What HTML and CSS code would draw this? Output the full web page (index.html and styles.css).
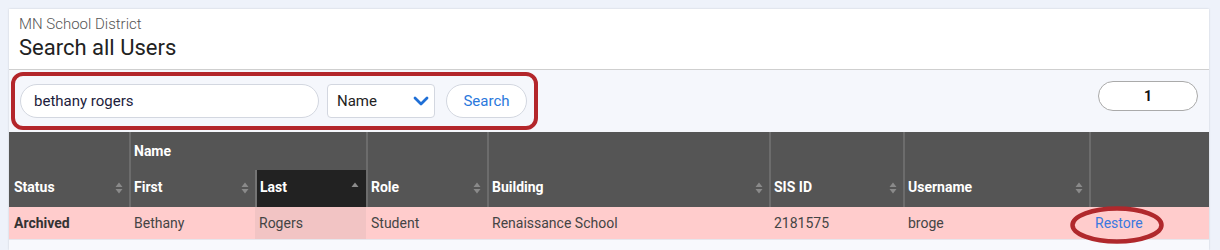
FILE: index.html
```html
<!DOCTYPE html>
<html lang="en">
<head>
<meta charset="utf-8">
<title>Search all Users</title>
<link rel="stylesheet" href="styles.css">
</head>
<body>
<div class="panel">
  <div class="header">
    <div class="org">MN School District</div>
    <h1 class="title">Search all Users</h1>
  </div>
  <div class="toolbar">
    <div class="search-box">
      <input class="search-input" type="text" value="bethany rogers">
      <div class="select">
        <span>Name</span>
        <svg class="chev" width="16" height="10" viewBox="0 0 16 10"><path d="M2 2 L8 8 L14 2" fill="none" stroke="#1f6fd6" stroke-width="2.8" stroke-linecap="round" stroke-linejoin="round"/></svg>
      </div>
      <button class="search-btn">Search</button>
    </div>
    <div class="pager">1</div>
  </div>
  <table class="grid">
    <colgroup>
      <col class="c-status"><col class="c-first"><col class="c-last"><col class="c-role"><col class="c-building"><col class="c-sis"><col class="c-user"><col class="c-act">
    </colgroup>
    <thead>
      <tr class="hr1">
        <th rowspan="2" class="bottom first-col"><div class="th-in"><span>Status</span><svg class="sort" width="8" height="14" viewBox="0 0 8 14"><path d="M0.5 6 L4 1.5 L7.5 6 Z M0.5 8 L4 12.5 L7.5 8 Z" fill="#8a8a8a"/></svg></div></th>
        <th colspan="2" class="group">Name</th>
        <th rowspan="2" class="bottom"><div class="th-in"><span>Role</span><svg class="sort" width="8" height="14" viewBox="0 0 8 14"><path d="M0.5 6 L4 1.5 L7.5 6 Z M0.5 8 L4 12.5 L7.5 8 Z" fill="#8a8a8a"/></svg></div></th>
        <th rowspan="2" class="bottom"><div class="th-in"><span>Building</span><svg class="sort" width="8" height="14" viewBox="0 0 8 14"><path d="M0.5 6 L4 1.5 L7.5 6 Z M0.5 8 L4 12.5 L7.5 8 Z" fill="#8a8a8a"/></svg></div></th>
        <th rowspan="2" class="bottom"><div class="th-in"><span>SIS ID</span><svg class="sort" width="8" height="14" viewBox="0 0 8 14"><path d="M0.5 6 L4 1.5 L7.5 6 Z M0.5 8 L4 12.5 L7.5 8 Z" fill="#8a8a8a"/></svg></div></th>
        <th rowspan="2" class="bottom"><div class="th-in"><span>Username</span><svg class="sort" width="8" height="14" viewBox="0 0 8 14"><path d="M0.5 6 L4 1.5 L7.5 6 Z M0.5 8 L4 12.5 L7.5 8 Z" fill="#8a8a8a"/></svg></div></th>
        <th rowspan="2" class="bottom"></th>
      </tr>
      <tr class="hr2">
        <th class="bottom sub-first"><div class="th-in"><span>First</span><svg class="sort" width="8" height="14" viewBox="0 0 8 14"><path d="M0.5 6 L4 1.5 L7.5 6 Z M0.5 8 L4 12.5 L7.5 8 Z" fill="#8a8a8a"/></svg></div></th>
        <th class="bottom sorted"><div class="th-in"><span>Last</span><svg class="sort" width="8" height="14" viewBox="0 0 8 14"><path d="M0.5 6 L4 1.5 L7.5 6 Z" fill="#8c8c8c"/></svg></div></th>
      </tr>
    </thead>
    <tbody>
      <tr class="archived">
        <td class="strong">Archived</td>
        <td>Bethany</td>
        <td class="sorted-cell">Rogers</td>
        <td>Student</td>
        <td>Renaissance School</td>
        <td>2181575</td>
        <td>broge</td>
        <td class="act"><a class="restore" href="#">Restore</a><svg class="ring" width="94" height="38" viewBox="0 0 94 38"><ellipse cx="47" cy="19" rx="44.5" ry="16.5" fill="none" stroke="#b0282c" stroke-width="4.5"/></svg></td>
      </tr>
    </tbody>
  </table>
  <div class="foot"></div>
</div>
</body>
</html>
```

FILE: styles.css
```css
* { box-sizing: border-box; }
html, body { margin: 0; padding: 0; }
body {
  background: #eef2fa;
  font-family: Roboto, "Liberation Sans", Arial, sans-serif;
  width: 1220px;
  height: 250px;
  overflow: hidden;
}
.panel {
  margin: 9px 0 0 9px;
  width: 1200px;
  height: 241px;
  background: #f8f9fd;
  box-shadow: 0 0 2px rgba(0, 0, 0, 0.15);
  overflow: hidden;
}
.header {
  height: 61px;
  background: #ffffff;
  border-bottom: 1px solid #cfcfcf;
  padding: 6px 10px 0 10px;
}
.org {
  font-size: 15px;
  line-height: 18px;
  color: #555555;
  font-weight: 300;
}
.title {
  margin: 2px 0 0 0;
  font-size: 22px;
  line-height: 26px;
  font-weight: 400;
  color: #222222;
}
.toolbar {
  height: 62px;
  background: #f5f7fc;
  padding: 2px 11px 0 2px;
  display: flex;
  justify-content: space-between;
  align-items: flex-start;
}
.search-box {
  width: 527px;
  height: 58px;
  border: 4px solid #b3262b;
  border-radius: 12px;
  padding: 8px 7px 8px 5px;
  display: flex;
  align-items: center;
}
.search-input {
  width: 299px;
  height: 34px;
  border: 1px solid #d3d7e0;
  border-radius: 17px;
  background: #ffffff;
  padding: 0 0 0 13px;
  font-family: inherit;
  font-size: 15px;
  color: #1c1c3c;
  outline: none;
}
.select {
  margin-left: 8px;
  width: 108px;
  height: 34px;
  border: 1px solid #d3d7e0;
  border-radius: 4px;
  background: #ffffff;
  display: flex;
  align-items: center;
  justify-content: space-between;
  padding: 0 5px 0 9px;
  font-size: 15px;
  color: #222222;
}
.search-btn {
  margin-left: 11px;
  width: 81px;
  height: 34px;
  border: 1px solid #d3d7e0;
  border-radius: 17px;
  background: #ffffff;
  font-family: inherit;
  font-size: 15px;
  color: #2a78dc;
  padding: 0;
}
.pager {
  margin-top: 9px;
  width: 100px;
  height: 30px;
  border: 1px solid #aaaaaa;
  border-radius: 15px;
  background: #ffffff;
  display: flex;
  align-items: center;
  justify-content: center;
  font-size: 14px;
  font-weight: 700;
  color: #111111;
}
.grid {
  width: 1200px;
  table-layout: fixed;
  border-collapse: separate;
  border-spacing: 0;
}
.c-status { width: 120px; }
.c-first { width: 126px; }
.c-last { width: 111px; }
.c-role { width: 121px; }
.c-building { width: 282px; }
.c-sis { width: 134px; }
.c-user { width: 186px; }
.c-act { width: 120px; }
.grid th {
  background: #555555;
  color: #ffffff;
  font-size: 14px;
  font-weight: 700;
  text-align: left;
  border-left: 2px solid #6c6c6c;
  padding: 0 6px 0 3px;
  line-height: 17px;
}
.grid th.first-col { border-left: none; padding-left: 5px; }
.hr1 { height: 38px; }
.hr2 { height: 37px; }
.grid th.group { vertical-align: middle; padding-left: 3px; }
.grid th.bottom { vertical-align: bottom; padding-bottom: 11px; }
.grid th.sub-first { border-left: 2px solid #6c6c6c; }
.grid th.sorted { background: #222222; border-left: 2px solid #747474; padding-right: 7px; }
.th-in {
  display: flex;
  justify-content: space-between;
  align-items: center;
}
.sort { display: block; flex: none; }
.archived { height: 33px; }
.archived td {
  background: #ffcccc;
  font-size: 14px;
  color: #444444;
  padding: 0 0 0 5px;
  border-bottom: 1px solid #e6e6ec;
  white-space: nowrap;
}
.archived td.strong { font-weight: 700; color: #333333; }
.archived td.sorted-cell { background: #f2c4c4; padding-left: 4px; }
.archived td.act { position: relative; padding-left: 6px; }
.restore { color: #3a78e0; text-decoration: none; }
.ring {
  position: absolute;
  left: -19px;
  top: -1px;
  pointer-events: none;
}
.foot { height: 10px; }
```
